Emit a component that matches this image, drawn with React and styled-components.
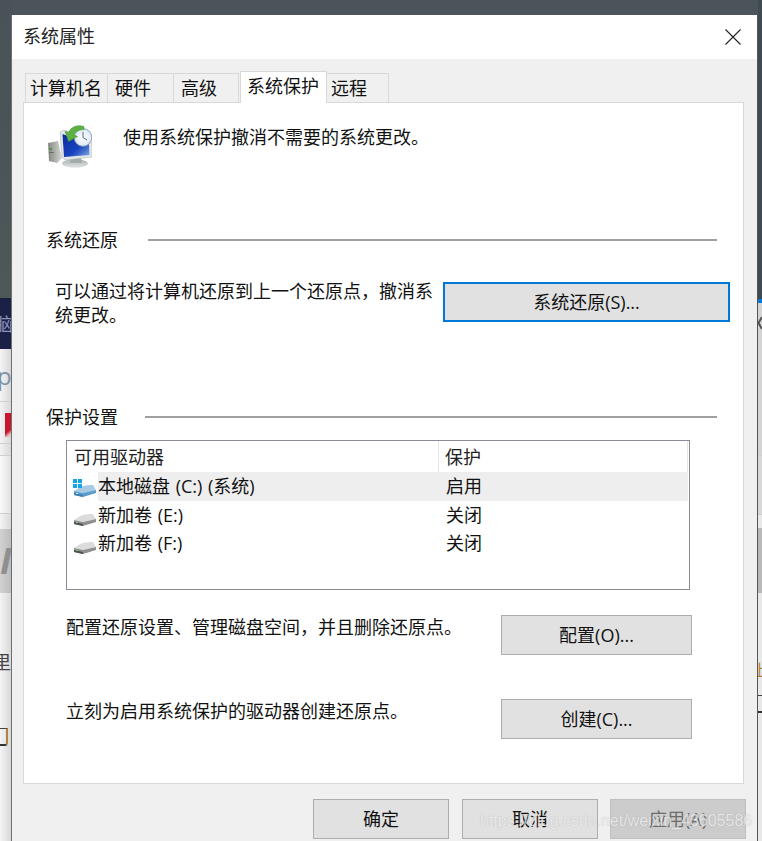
import React from 'react';
import styled, { createGlobalStyle } from 'styled-components';

const Global = createGlobalStyle`
  html, body { margin: 0; padding: 0; width: 762px; height: 841px; overflow: hidden; background: #4a545a; }
  * { box-sizing: border-box; }
`;

const FONT = `"Open Sans", "Noto Sans CJK SC", sans-serif`;

const Desktop = styled.div`
  position: relative;
  display: flex;
  width: 762px;
  height: 841px;
  overflow: hidden;
  font-family: ${FONT};
  font-size: 18px;
  line-height: 24px;
  color: #111;
`;

const Strip = styled.div`
  display: flex;
  flex-direction: column;
  flex: none;
  width: ${p => p.$w}px;
  height: 841px;
  overflow: hidden;
  background: #f0f0f0;
`;

const Band = styled.div`
  flex: none;
  height: ${p => p.$h}px;
  background: ${p => p.$bg};
  color: ${p => p.$fg || '#333'};
  font-size: ${p => p.$size || 18}px;
  font-style: ${p => p.$italic ? 'italic' : 'normal'};
  font-weight: ${p => p.$italic ? 700 : 400};
  line-height: ${p => p.$h}px;
  white-space: nowrap;
  overflow: hidden;
  border-bottom: ${p => p.$rule ? '1px solid #cfcfcf' : '0'};
  display: flex;
  align-items: center;
`;

const BandText = styled.span`
  flex: none;
  margin-left: ${p => p.$x}px;
  margin-top: ${p => p.$y || 0}px;
`;

const RedMark = styled.span`
  display: block;
  width: 6px;
  height: 24px;
  margin: 4px 0 0 5px;
  background: linear-gradient(140deg, #c8162c 72%, #e8c0c0 88%);
`;

const CornerMark = styled.span`
  display: block;
  flex: none;
  width: 11px;
  height: 18px;
  margin-left: -3px;
  border-bottom: 2px solid #333;
  border-right: 2px solid #b5823c;
  border-top: 1px solid #444;
  border-bottom-right-radius: 3px;
`;

const Dialog = styled.div`
  flex: none;
  width: 747px;
  height: 826px;
  margin-top: 15px;
  border-left: 1px solid #6f6f6f;
  border-right: 1px solid #555;
  display: flex;
  flex-direction: column;
  background: #f0f0f0;
`;

const TitleBar = styled.div`
  flex: none;
  height: 44px;
  background: #fff;
  padding: 0 16px 1px 11px;
  display: flex;
  align-items: center;
  justify-content: space-between;
`;

const Title = styled.div`
  color: #222;
  margin-bottom: 1px;
`;

const Body = styled.div`
  flex: 1;
  padding: 14px 13px 0 11px;
  display: flex;
  flex-direction: column;
`;

const TabStrip = styled.div`
  flex: none;
  height: 30px;
  padding-left: 2px;
  display: flex;
  align-items: flex-end;
  position: relative;
  z-index: 1;
  margin-bottom: -1px;
`;

const Tab = styled.div`
  flex: none;
  width: ${p => p.$w}px;
  height: ${p => p.$active ? 32 : 30}px;
  margin-left: ${p => p.$gap || 0}px;
  background: ${p => p.$active ? '#fff' : '#f0f0f0'};
  border: 1px solid #d9d9d9;
  border-left-width: ${p => p.$first || p.$active ? 1 : 0}px;
  border-bottom: ${p => p.$active ? '0' : '1px solid #d9d9d9'};
  padding-left: ${p => p.$pad}px;
  line-height: 28px;
  white-space: nowrap;
`;

const Panel = styled.div`
  flex: none;
  height: 682px;
  background: #fff;
  border: 1px solid #d9d9d9;
  padding: 21px 13px 0 22px;
  display: flex;
  flex-direction: column;
`;

const Intro = styled.div`
  flex: none;
  height: 44px;
  padding-left: 2px;
  display: flex;
  align-items: flex-start;
  gap: 31px;
`;

const IntroText = styled.div`
  margin-top: 1px;
`;

const SectionHead = styled.div`
  flex: none;
  height: 24px;
  margin-top: ${p => p.$top}px;
  margin-right: 13px;
  display: flex;
  align-items: center;
  gap: ${p => p.$gap}px;
`;

const Rule = styled.div`
  flex: 1;
  height: 2px;
  background: #a0a0a0;
`;

const RestoreRow = styled.div`
  flex: none;
  height: 48px;
  margin-top: 27px;
  padding-left: 9px;
  display: flex;
  align-items: flex-start;
`;

const RestoreText = styled.div`
  width: 388px;
  flex: none;
`;

const Button = styled.div`
  flex: none;
  width: ${p => p.$w}px;
  height: 40px;
  margin-top: ${p => p.$top || 0}px;
  display: flex;
  align-items: center;
  justify-content: center;
  background: ${p => p.$disabled ? '#cccccc' : '#e1e1e1'};
  border: ${p => p.$focus ? '2px solid #0078d7' : p.$disabled ? '1px solid #bfbfbf' : '1px solid #adadad'};
  color: ${p => p.$disabled ? '#6d6d6d' : '#111'};
  white-space: nowrap;
`;

const List = styled.div`
  flex: none;
  width: 624px;
  height: 150px;
  margin: 11px 0 0 20px;
  border: 1px solid #8b8b96;
  background: #fff;
  padding-right: 1px;
`;

const ListHead = styled.div`
  height: 31px;
  display: grid;
  grid-template-columns: 372px 249px;
  line-height: 33px;
  color: #222;
`;

const HeadCell = styled.div`
  padding-left: ${p => p.$pad}px;
  border-right: 1px solid #e5e5e5;
`;

const Row = styled.div`
  height: 28.5px;
  display: grid;
  grid-template-columns: 372px 249px;
  align-items: center;
`;

const NameCell = styled.div`
  height: 100%;
  display: flex;
  align-items: center;
  padding-left: 6px;
  gap: 1px;
`;

const Name = styled.div`
  flex: 1;
  height: 100%;
  line-height: 28px;
  word-spacing: 1px;
  background: ${p => p.$selected ? '#eeeeee' : 'transparent'};
  white-space: nowrap;
`;

const StateCell = styled.div`
  height: 100%;
  padding-left: 7px;
  line-height: 28px;
  background: ${p => p.$selected ? '#eeeeee' : 'transparent'};
`;

const DriveSvg = styled.svg`
  flex: none;
  width: 24px;
  height: 20px;
  margin-top: 4px;
`;

const Actions = styled.div`
  flex: none;
  margin: 25px 0 0 20px;
  display: flex;
  flex-direction: column;
  gap: 44px;
`;

const ActionRow = styled.div`
  display: flex;
  align-items: flex-start;
`;

const ActionText = styled.div`
  flex: none;
  width: 435px;
`;

const Footer = styled.div`
  flex: none;
  padding: 15px 0 0;
  margin-right: -2px;
  display: flex;
  justify-content: flex-end;
  gap: 12px;
  & > :first-child { margin-right: 1px; }
`;

const Watermark = styled.div`
  position: absolute;
  left: 480px;
  top: 811px;
  font-family: "Liberation Sans", sans-serif;
  font-size: 16px;
  line-height: 20px;
  color: rgba(255, 255, 255, 0.72);
  text-shadow: 0 0 1px rgba(120, 120, 120, 0.5);
  white-space: nowrap;
`;

const RestoreIcon = () => (
  <svg width="44" height="44" viewBox="0 0 44 44" style={{ flex: 'none' }}>
    <defs>
      <linearGradient id="scr" x1="0" y1="0" x2="1" y2="1">
        <stop offset="0" stopColor="#0a2a9e" />
        <stop offset="0.6" stopColor="#1844bd" />
        <stop offset="1" stopColor="#86aae6" />
      </linearGradient>
      <radialGradient id="clk" cx="0.5" cy="0.5" r="0.6">
        <stop offset="0" stopColor="#fdfeff" />
        <stop offset="0.8" stopColor="#dfeaf5" />
        <stop offset="1" stopColor="#8fa9c4" />
      </radialGradient>
      <linearGradient id="twr" x1="0" y1="0" x2="1" y2="0">
        <stop offset="0" stopColor="#83877f" />
        <stop offset="1" stopColor="#d6d8d4" />
      </linearGradient>
      <linearGradient id="bas" x1="0" y1="0" x2="0" y2="1">
        <stop offset="0" stopColor="#aeb2b2" />
        <stop offset="1" stopColor="#e2e4e4" />
      </linearGradient>
    </defs>
    <path d="M0 19 L10 17 L14 34 L9 39 L1 37 Z" fill="url(#twr)" />
    <rect x="1" y="24" width="3" height="2" fill="#5c8c4a" />
    <rect x="1" y="28" width="5" height="1" fill="#6b6f69" />
    <ellipse cx="27" cy="39.5" rx="13" ry="4.2" fill="url(#bas)" />
    <path d="M23 33 L33 33 L34 39 L22 39 Z" fill="#a4a9a9" />
    <path d="M12 8 L16 6 L44 18 L44 33 L17 36 L14 33 Z" fill="#e3e7e8" stroke="#b4babc" strokeWidth="0.6" />
    <path d="M14.5 10 L41 20 L41.5 31 L16 33 Z" fill="url(#scr)" />
    <circle cx="35" cy="13.5" r="8.8" fill="url(#clk)" stroke="#7d97b0" strokeWidth="0.9" />
    <path d="M35 8 L35 13.5 L39 16" fill="none" stroke="#47596b" strokeWidth="0.9" />
    <path d="M36 2.6 C29 0 23 3 20.5 8.5 L17 7 L20.5 17.5 L29.5 12.5 L26 10.8 C27.5 7.8 31 5.6 36 5.6 Z" fill="#5fb043" stroke="#3e8e33" strokeWidth="0.5" />
  </svg>
);

const Drive = ({ system }) => {
  const top = system ? '#a8cbe4' : '#dcdcdc';
  const front = system ? '#5b9ccb' : '#8f8f8f';
  const low = system ? '#3d7fb0' : '#4f4f4f';
  return (
    <DriveSvg viewBox="0 0 24 20">
      <path d="M1 13 L8 8.5 Q14 6.5 20 7 L23 12 L10 15 Z" fill={top} />
      <path d="M1 13 L10 15 L23 12 L23 15 L10 19 L1 17 Z" fill={front} />
      <path d="M1 15 L10 17 L10 19 L1 17 Z" fill={low} />
      <rect x="3" y="15" width="2" height="1" fill={system ? '#cfe8f7' : '#6fcf5a'} />
      {system && (
        <g fill="#12a5ea">
          <rect x="0" y="1" width="4" height="4" />
          <rect x="5" y="1" width="4" height="4" />
          <rect x="0" y="6" width="4" height="4" />
          <rect x="5" y="6" width="4" height="4" />
        </g>
      )}
    </DriveSvg>
  );
};

const drives = [
  { name: '本地磁盘 (C:) (系统)', state: '启用', system: true },
  { name: '新加卷 (E:)', state: '关闭' },
  { name: '新加卷 (F:)', state: '关闭' },
];

const tabs = [
  { label: '计算机名', w: 83, pad: 4, first: true },
  { label: '硬件', w: 66, pad: 7 },
  { label: '高级', w: 65, pad: 7 },
  { label: '系统保护', w: 87, pad: 6, active: true, gap: 1 },
  { label: '远程', w: 62, pad: 4 },
];

const sideGrad = 'linear-gradient(90deg,#f4f4f4,#d8d8d8)';

export default function App() {
  return (
    <Desktop>
      <Global />
      <Strip $w={11}>
        <Band $h={298} $bg="linear-gradient(180deg,#485258,#4e5858)" />
        <Band $h={51} $bg="#1b2046" $fg="#8d95bb"><BandText $x={-5} $y={2}>脑</BandText></Band>
        <Band $h={53} $bg={sideGrad} $fg="#7f93a8" $size={24} $rule><BandText $x={-3}>p</BandText></Band>
        <Band $h={42} $bg={sideGrad} $rule><RedMark /></Band>
        <Band $h={12} $bg={sideGrad} $rule />
        <Band $h={58} $bg="linear-gradient(90deg,#fbfbfb,#e0e0e0)" $rule />
        <Band $h={15} $bg={sideGrad} />
        <Band $h={64} $bg="linear-gradient(90deg,#d2d2d2,#bcbcbc)" $fg="#8f8f8f" $size={36} $italic><BandText $x={0}>I</BandText></Band>
        <Band $h={59} $bg={sideGrad} />
        <Band $h={21} $bg={sideGrad} $fg="#444"><BandText $x={-7}>里于</BandText></Band>
        <Band $h={54} $bg={sideGrad} />
        <Band $h={20} $bg={sideGrad}><CornerMark /></Band>
        <Band $h={94} $bg={sideGrad} />
      </Strip>

      <Dialog>
        <TitleBar>
          <Title>系统属性</Title>
          <svg width="16" height="16" viewBox="0 0 16 16">
            <path d="M0.5 0.5 L15.5 15.5 M15.5 0.5 L0.5 15.5" stroke="#222" strokeWidth="1.1" fill="none" />
          </svg>
        </TitleBar>
        <Body>
          <TabStrip>
            {tabs.map(t => (
              <Tab key={t.label} $w={t.w} $pad={t.pad} $first={t.first} $active={t.active} $gap={t.gap}>{t.label}</Tab>
            ))}
          </TabStrip>
          <Panel>
            <Intro>
              <RestoreIcon />
              <IntroText>使用系统保护撤消不需要的系统更改。</IntroText>
            </Intro>

            <SectionHead $top={60} $gap={30}>
              <span>系统还原</span>
              <Rule />
            </SectionHead>
            <RestoreRow>
              <RestoreText>可以通过将计算机还原到上一个还原点，撤消系统更改。</RestoreText>
              <Button $w={287} $top={3} $focus>系统还原(S)...</Button>
            </RestoreRow>

            <SectionHead $top={78} $gap={27}>
              <span>保护设置</span>
              <Rule />
            </SectionHead>
            <List>
              <ListHead>
                <HeadCell $pad={7}>可用驱动器</HeadCell>
                <HeadCell $pad={6}>保护</HeadCell>
              </ListHead>
              {drives.map(d => (
                <Row key={d.name}>
                  <NameCell>
                    <Drive system={d.system} />
                    <Name $selected={d.system}>{d.name}</Name>
                  </NameCell>
                  <StateCell $selected={d.system}>{d.state}</StateCell>
                </Row>
              ))}
            </List>

            <Actions>
              <ActionRow>
                <ActionText>配置还原设置、管理磁盘空间，并且删除还原点。</ActionText>
                <Button $w={191}>配置(O)...</Button>
              </ActionRow>
              <ActionRow>
                <ActionText>立刻为启用系统保护的驱动器创建还原点。</ActionText>
                <Button $w={191}>创建(C)...</Button>
              </ActionRow>
            </Actions>
          </Panel>
          <Footer>
            <Button $w={136}>确定</Button>
            <Button $w={136}>取消</Button>
            <Button $w={136} $disabled>应用(A)</Button>
          </Footer>
        </Body>
      </Dialog>

      <Strip $w={4}>
        <Band $h={299} $bg="#3f4b50" />
        <Band $h={4} $bg="#0a78d7" />
        <Band $h={40} $bg="#d4d4d4" $fg="#555">
          <svg width="4" height="14" viewBox="0 0 4 14" style={{ flex: 'none' }}>
            <path d="M4 1 L0.5 7 L4 13" stroke="#555" strokeWidth="2" fill="none" />
          </svg>
        </Band>
        <Band $h={113} $bg="#d4d4d4" $rule />
        <Band $h={59} $bg="#d8d8d8" $rule />
        <Band $h={13} $bg="#e8e8e8" />
        <Band $h={65} $bg="#b9b9b9" />
        <Band $h={67} $bg="#e8e8e8" />
        <Band $h={20} $bg="#e8e8e8" $fg="#b5823c" $size={16}><BandText $x={-6}>上</BandText></Band>
        <Band $h={10} $bg="#e8e8e8" />
        <Band $h={28} $bg="#e8e8e8"><CornerMark /></Band>
        <Band $h={123} $bg="#e8e8e8" />
      </Strip>

      <Watermark>https://blog.csdn.net/weixin_43605586</Watermark>
    </Desktop>
  );
}
